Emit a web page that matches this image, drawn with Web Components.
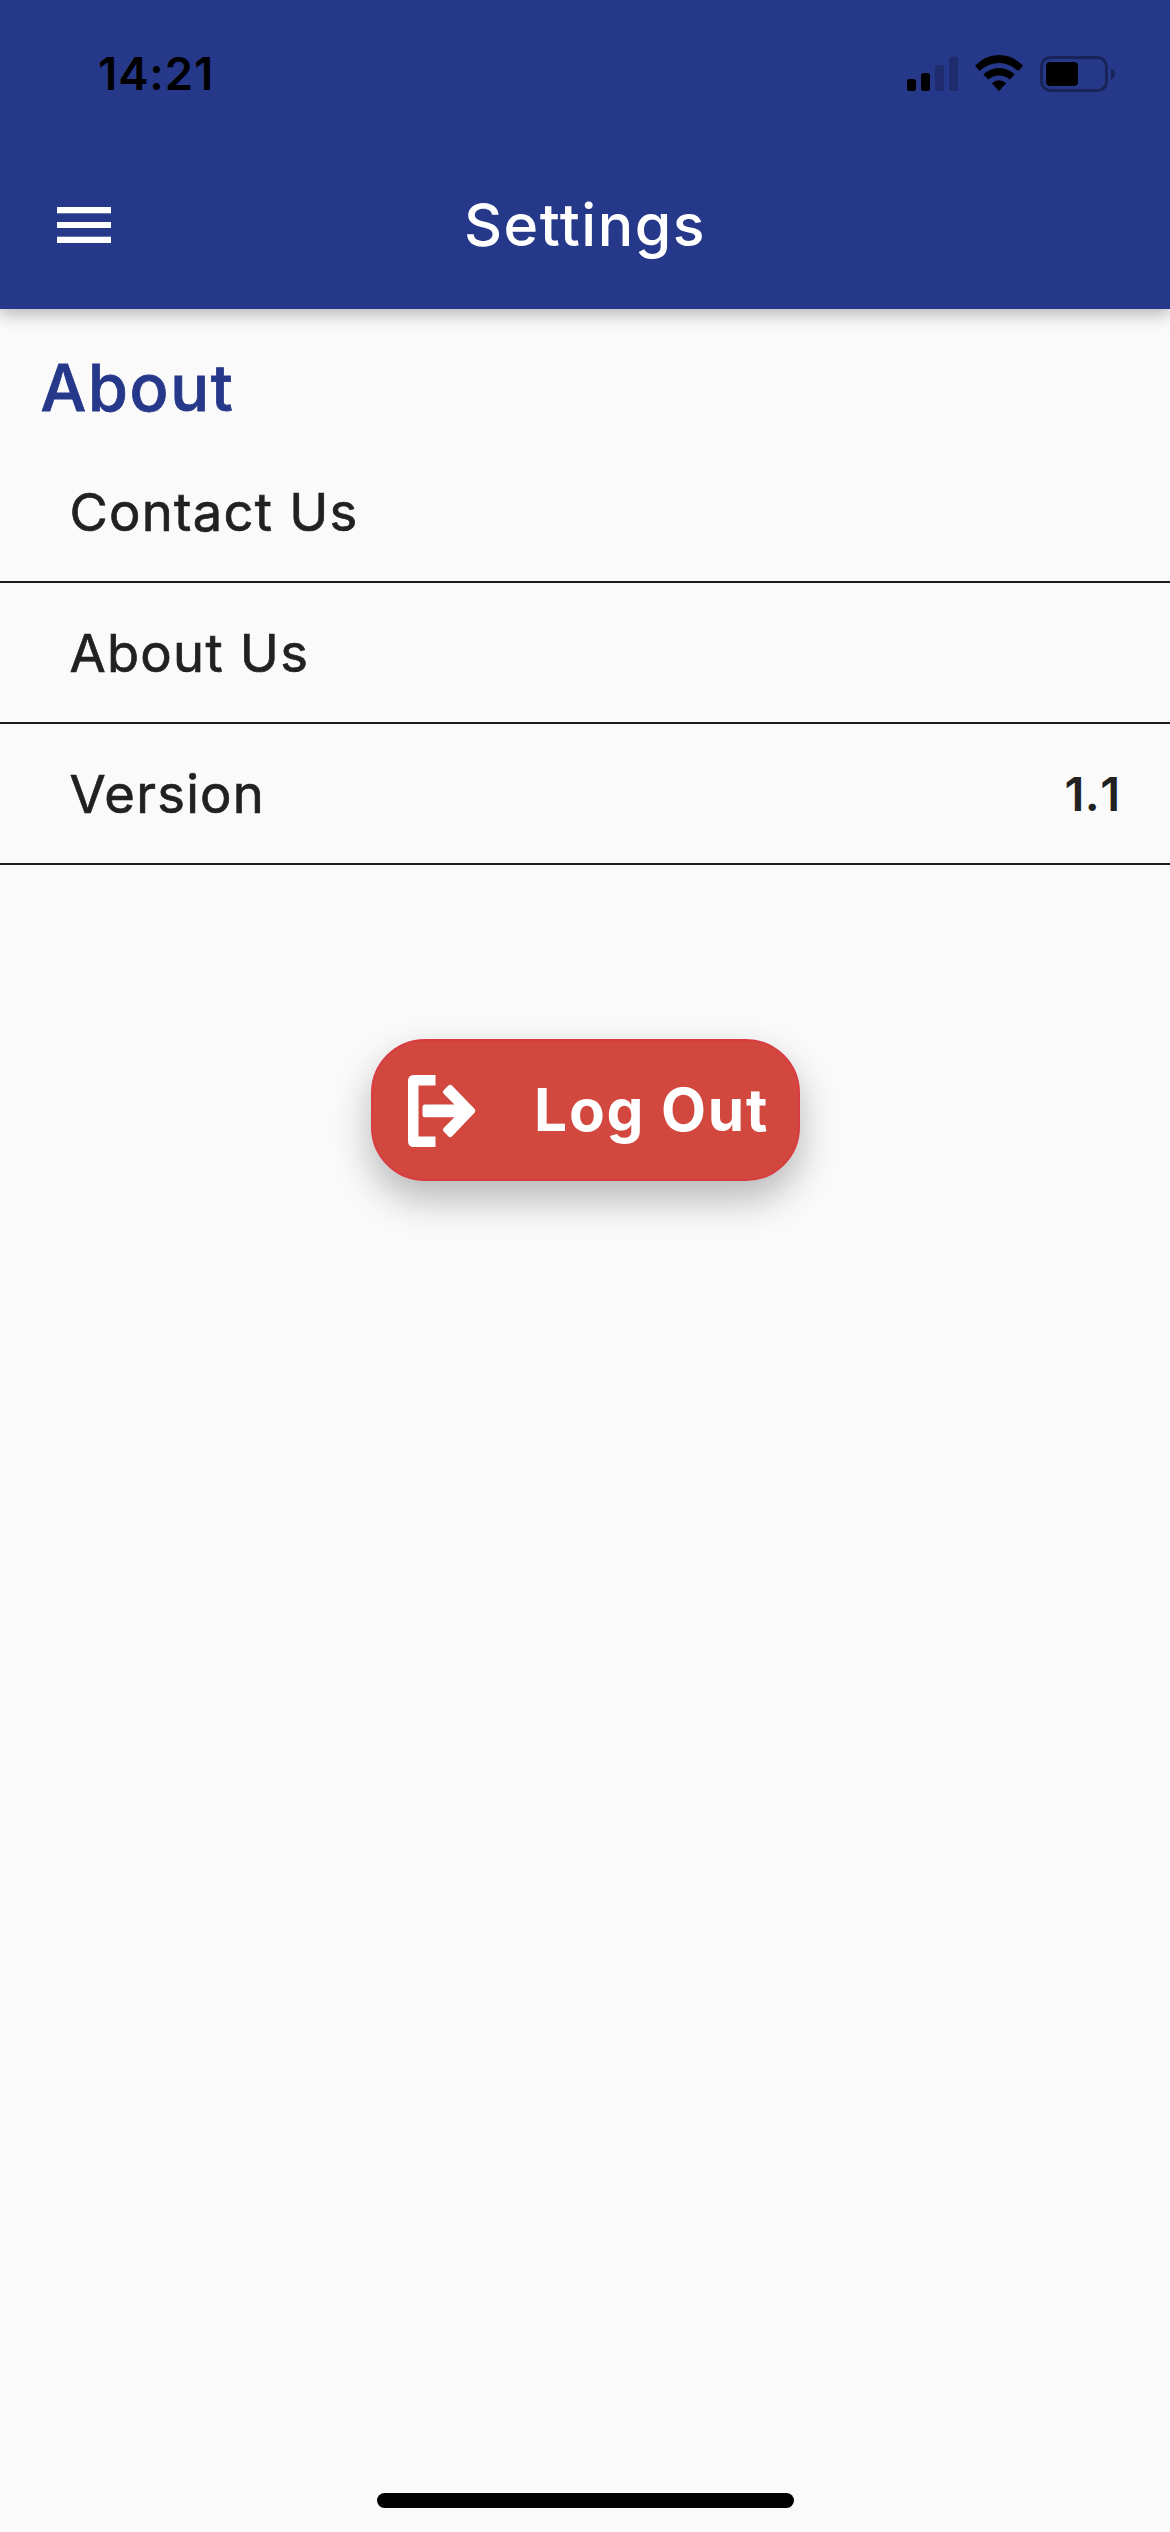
<!DOCTYPE html>
<html lang="en">
<head>
<meta charset="utf-8">
<title>Settings</title>
<style>
html,body{margin:0;padding:0;background:#fafafa}
body{font-family:Inter,"Liberation Sans",sans-serif;color:#212121}
</style>
</head>
<body>
<settings-screen></settings-screen>
<script>
const define = (name, html) => customElements.define(name, class extends HTMLElement {
  constructor() {
    super();
    this.attachShadow({ mode: 'open' }).innerHTML = html;
  }
});

define('status-bar', `
<style>
:host{display:flex;box-sizing:border-box;height:141px;padding:7px 55px 0 98px;align-items:center;justify-content:space-between;color:#000}
.time{font-size:45.5px;font-weight:600;line-height:54px;letter-spacing:.9px}
.icons{display:flex;align-items:center}
svg{display:block}
.wifi{margin:0 17px 2px}
</style>
<span class="time">14:21</span>
<div class="icons">
<svg width="51" height="34" viewBox="0 0 51 34"><rect y="22" width="9" height="12" rx="2.5"/><rect x="14" y="16" width="9" height="18" rx="2.5"/><g opacity=".2"><rect x="28" y="8" width="9" height="26" rx="2.5"/><rect x="42" width="9" height="34" rx="2.5"/></g></svg>
<svg class="wifi" width="48" height="36" viewBox="0 0 48 36"><path d="M0 10.8Q10.500 0 24 0T48 10.800L43.300 15.900Q34.500 7.900 24 7.900T4.700 15.900Z"/><path d="M8.300 19.500Q15 12.900 24 12.900T39.700 19.500L34.700 24.600Q30 20.400 24 20.400T13.300 24.600Z"/><path d="M16.800 28.200Q20 25.300 24 25.300T31.200 28.200L24 36Z"/></svg>
<svg width="75" height="36" viewBox="0 0 75 36"><rect x="1.5" y="1.5" width="65" height="33" rx="9" fill="none" stroke="#000" stroke-opacity=".36" stroke-width="3"/><rect x="6" y="6" width="32" height="24" rx="4"/><path d="M71 12.500Q75 14 75 18T71 23.500Z" opacity=".36"/></svg>
</div>`);

define('app-bar', `
<style>
:host{display:block;position:relative;height:309px;background:#263889;box-shadow:0 6px 15px rgba(0,0,0,.26)}
.bar{display:grid;grid-template-columns:168px 1fr 168px;align-items:center;height:168px;color:#fff}
svg{display:block;margin-left:57px}
h1{margin:0;text-align:center;font-size:59px;font-weight:500;line-height:72px;letter-spacing:1.5px;white-space:nowrap}
</style>
<status-bar></status-bar>
<div class="bar">
<svg width="54" height="36" viewBox="0 0 54 36" fill="#fff"><rect width="54" height="6.3"/><rect y="15" width="54" height="6"/><rect y="29.7" width="54" height="6.3"/></svg>
<h1><slot></slot></h1>
</div>`);

define('section-title', `
<style>
:host{display:flex;box-sizing:border-box;height:133px;padding:24px 40.5px 0;align-items:center}
h2{margin:0;color:#263889;font-size:64.5px;font-weight:500;line-height:78px;letter-spacing:1.7px;-webkit-text-stroke:.8px currentColor}
</style>
<h2><slot></slot></h2>`);

define('settings-row', `
<style>
:host{display:flex;box-sizing:border-box;height:141px;padding:0 49.5px 0 69.5px;align-items:center;justify-content:space-between;border-bottom:2px solid #1c1b1f}
.label{font-size:52.5px;font-weight:400;line-height:64px;letter-spacing:1.25px;-webkit-text-stroke:.7px currentColor}
.value{font-size:47px;font-weight:600;line-height:58px;font-kerning:none;letter-spacing:.4px}
</style>
<span class="label"><slot></slot></span><span class="value"><slot name="value"></slot></span>`);

define('logout-button', `
<style>
:host{display:block}
button{display:flex;box-sizing:border-box;width:429px;height:142px;padding:0 0 0 35px;align-items:center;border:2px solid #d83c40;border-radius:54px;background:#d2483f;color:#fff;font:700 58.5px/72px Inter,"Liberation Sans",sans-serif;letter-spacing:1.8px;box-shadow:0 18px 38px rgba(0,0,0,.27)}
svg{display:block;flex:none;margin:1px 58.5px 0 0}
.label{white-space:nowrap}
</style>
<button>
<svg width="68" height="72" viewBox="0 0 68 72" fill="#fff"><path d="M27.500 0H6Q0 0 0 6V66Q0 72 6 72H27.500V61.500H10.500V10.500H27.500Z"/><path d="M17 29.500H46.500L35.700 18.700Q34 17 35.700 15.200L40.500 10.400Q42.200 9 43.900 10.400L66.700 34Q68 35.800 66.700 37.600L43.900 61.400Q42.200 63 40.500 61.400L35.700 56.600Q34 54.900 35.700 53.100L46.500 42.300H17Q14.500 42.300 14.500 39.800V32Q14.500 29.500 17 29.500Z"/></svg>
<span class="label"><slot></slot></span>
</button>`);

define('home-indicator', `
<style>:host{display:block;width:417px;height:15px;border-radius:7.5px;background:#000}</style>`);

define('settings-screen', `
<style>
:host{display:flex;flex-direction:column;align-items:stretch;width:1170px;height:2532px;background:#fafafa;overflow:hidden}
.action{display:flex;justify-content:center;padding-top:174px}
.foot{display:flex;justify-content:center;margin-top:auto;padding:0 0 24px 1px}
</style>
<app-bar>Settings</app-bar>
<main>
<section-title>About</section-title>
<settings-row>Contact Us</settings-row>
<settings-row>About Us</settings-row>
<settings-row>Version<span slot="value">1.1</span></settings-row>
<div class="action"><logout-button>Log Out</logout-button></div>
</main>
<div class="foot"><home-indicator></home-indicator></div>`);
</script>
</body>
</html>
